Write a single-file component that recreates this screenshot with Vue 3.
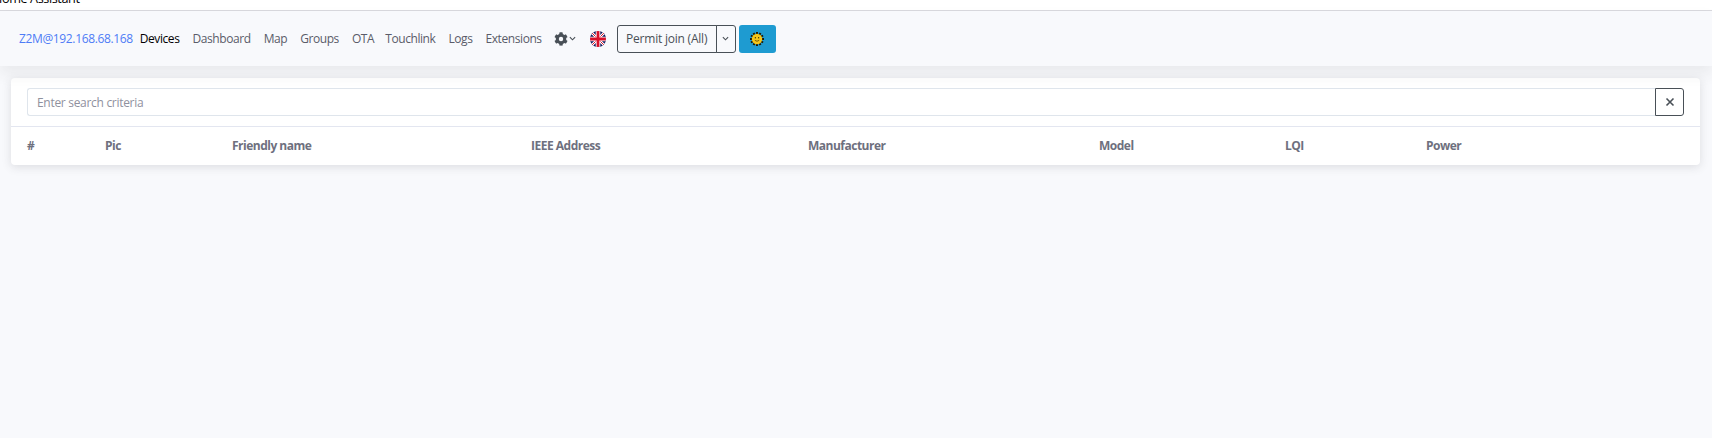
<script setup>
const links = ['Dashboard', 'Map', 'Groups', 'OTA', 'Touchlink', 'Logs', 'Extensions']
const columns = ['#', 'Pic', 'Friendly name', 'IEEE Address', 'Manufacturer', 'Model', 'LQI', 'Power']
const rays = [0, 30, 60, 90, 120, 150, 180, 210, 240, 270, 300, 330]
</script>

<template>
  <div class="page">
    <div class="strip"><span class="strip-text">Home Assistant</span></div>
    <nav class="nav">
      <a class="brand">Z2M@192.168.68.168</a>
      <a class="link active">Devices</a>
      <a v-for="l in links" :key="l" class="link">{{ l }}</a>
      <span class="gear">
        <svg width="14" height="14" viewBox="0 0 512 512"><path fill="#495057" d="M487 316l-42-25a190 190 0 0 0 0-70l42-25c5-3 7-9 5-14-11-35-30-67-54-93-4-4-10-5-15-2l-42 25a190 190 0 0 0-61-35V28c0-6-4-11-9-12-36-8-73-8-108 0-5 1-9 6-9 12v49a190 190 0 0 0-61 35L91 87c-5-3-11-2-15 2-24 26-43 58-54 93-2 5 0 11 5 14l42 25a190 190 0 0 0 0 70l-42 25c-5 3-7 9-5 14 11 35 30 67 54 93 4 4 10 5 15 2l42-25a190 190 0 0 0 61 35v49c0 6 4 11 9 12 36 8 73 8 108 0 5-1 9-6 9-12v-49a190 190 0 0 0 61-35l42 25c5 3 11 2 15-2 24-26 43-58 54-93 2-5 0-11-5-14zM256 336a80 80 0 1 1 0-160 80 80 0 0 1 0 160z"/></svg>
        <svg class="caret" width="7" height="7" viewBox="0 0 8 8"><path d="M1 2.5 4 5.5 7 2.5" fill="none" stroke="#495057" stroke-width="1.3"/></svg>
      </span>
      <svg class="flag" width="16" height="16" viewBox="0 0 16 16">
        <defs><clipPath id="flag-clip"><circle cx="8" cy="8" r="8"/></clipPath></defs>
        <g clip-path="url(#flag-clip)">
          <rect width="16" height="16" fill="#10185c"/>
          <path d="M0 0 16 16M16 0 0 16" stroke="#fff" stroke-width="2.6"/>
          <path d="M0 0 16 16M16 0 0 16" stroke="#d8102a" stroke-width="1"/>
          <path d="M8 0V16M0 8H16" stroke="#fff" stroke-width="4.6"/>
          <path d="M8 0V16M0 8H16" stroke="#d8102a" stroke-width="2.8"/>
        </g>
      </svg>
      <div class="permit">
        <button class="permit-main">Permit join (All)</button>
        <button class="permit-caret">
          <svg width="7" height="7" viewBox="0 0 8 8"><path d="M1 2.5 4 5.5 7 2.5" fill="none" stroke="#495057" stroke-width="1.3"/></svg>
        </button>
      </div>
      <button class="theme">
        <svg width="14" height="14" viewBox="0 0 14 14">
          <g fill="#1f1a05"><rect v-for="r in rays" :key="r" x="6" y="0" width="2" height="3" :transform="`rotate(${r} 7 7)`"/></g>
          <circle cx="7" cy="7" r="5.2" fill="#f5c518"/>
          <path d="M4.8 8.3Q7 10.2 9.2 8.3" fill="none" stroke="#5a4300" stroke-width="0.8"/>
          <rect x="4.8" y="5" width="1.2" height="1.4" fill="#5a4300"/>
          <rect x="8" y="5" width="1.2" height="1.4" fill="#5a4300"/>
        </svg>
      </button>
    </nav>
    <main class="content">
      <section class="card">
        <div class="search">
          <input class="search-input" placeholder="Enter search criteria" />
          <button class="clear">
            <svg width="10" height="10" viewBox="0 0 10 10"><path d="M1.5 1.5 8.5 8.5M8.5 1.5 1.5 8.5" stroke="#495057" stroke-width="1.6"/></svg>
          </button>
        </div>
        <div class="head">
          <span v-for="c in columns" :key="c">{{ c }}</span>
        </div>
      </section>
    </main>
  </div>
</template>

<style>
html, body { margin: 0; background: #f8f9fc; }
</style>

<style scoped>
.page {
  width: 1712px;
  height: 438px;
  overflow: hidden;
  background: #f8f9fc;
  font-family: "Open Sans", "Noto Sans", sans-serif;
  font-size: 12px;
  letter-spacing: -0.42px;
  color: #5a5c69;
}
.strip {
  height: 10px;
  overflow: hidden;
  background: #fff;
  border-bottom: 1px solid #d9d9de;
}
.strip-text {
  display: block;
  margin: -12px 0 0 -7px;
  font-size: 12.7px;
  line-height: 20px;
  color: #000;
}
.nav {
  height: 55px;
  display: flex;
  align-items: center;
  padding-left: 19px;
  box-shadow: 0 8px 14px rgba(58, 59, 69, 0.08);
  position: relative;
}
.brand { color: #4e7cf6; margin-right: 7px; letter-spacing: -0.36px; }
.link { margin-right: 13px; color: #5a5c69; }
.link:nth-of-type(6) { margin-right: 11px; }
.link:nth-of-type(9) { margin-right: 12px; }
.active { color: #000; }
.gear { display: flex; align-items: center; margin-right: 14px; }
.caret { margin-left: 1px; }
.flag { margin-right: 11px; }
.permit { display: flex; height: 28px; margin-right: 3px; }
.permit-main, .permit-caret {
  font: inherit;
  letter-spacing: -0.22px;
  background: transparent;
  color: #495057;
  border: 1px solid #495057;
  padding: 0;
}
.permit-main { width: 100px; border-radius: 3px 0 0 3px; }
.permit-caret {
  width: 20px;
  margin-left: -1px;
  border-radius: 0 3px 3px 0;
  display: flex;
  align-items: center;
  justify-content: center;
}
.theme {
  width: 37px;
  height: 28px;
  padding: 0;
  border: 0;
  border-radius: 3px;
  background: #1e9bd1;
  display: flex;
  align-items: center;
  justify-content: center;
}
.content { padding: 12px 12px 0 11px; }
.card {
  background: #fff;
  border-radius: 4px;
  box-shadow: 0 2px 10px rgba(58, 59, 69, 0.15);
}
.search {
  display: flex;
  padding: 10px 16px;
  border-bottom: 1px solid #e3e6f0;
}
.search-input {
  flex: 1;
  min-width: 0;
  height: 28px;
  box-sizing: border-box;
  padding: 0 9px;
  font: inherit;
  letter-spacing: -0.3px;
  color: #495057;
  background: #fff;
  border: 1px solid #dfe5ec;
  border-right: 0;
  border-radius: 3px 0 0 3px;
  outline: none;
}
.search-input::placeholder { color: #8f919e; opacity: 1; }
.clear {
  width: 29px;
  height: 28px;
  padding: 0;
  background: #fff;
  border: 1px solid #495057;
  border-radius: 0 3px 3px 0;
  display: flex;
  align-items: center;
  justify-content: center;
}
.head {
  display: grid;
  grid-template-columns: 78px 127px 299px 277px 291px 186px 141px 1fr;
  align-items: center;
  height: 37px;
  padding: 0 0 1px 16px;
  font-weight: 700;
  letter-spacing: -0.5px;
  color: #6e707e;
}
</style>
